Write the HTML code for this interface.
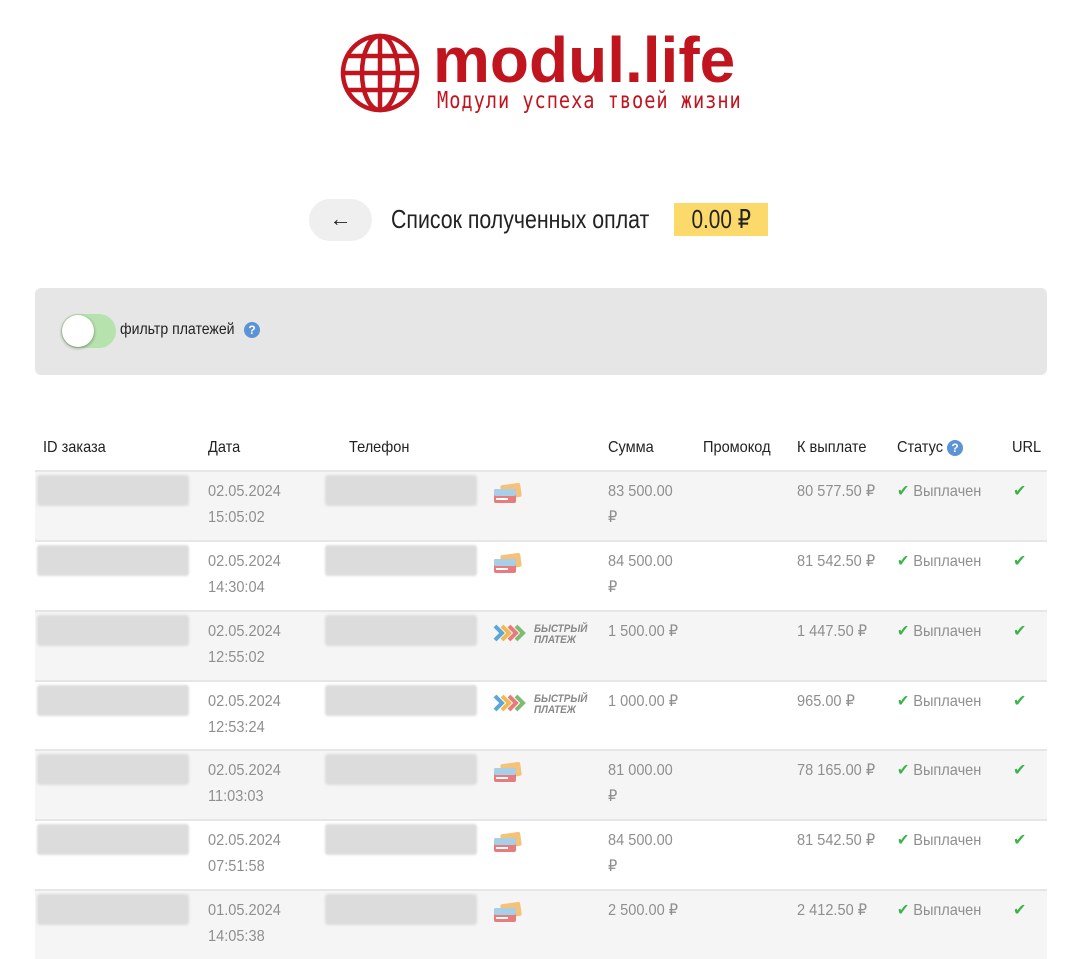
<!DOCTYPE html><html><head><meta charset="utf-8"><style>
*{margin:0;padding:0;box-sizing:border-box}
body{width:1080px;height:948px;background:#fff;font-family:"Liberation Sans",sans-serif;position:relative;overflow:hidden;color:#222}
.a{position:absolute;white-space:nowrap}
.n{transform:scaleX(.91);transform-origin:0 0}
.row{position:absolute;left:35px;width:1012px;height:70px;border-top:2px solid #e6e6e6}
.g{color:#8f8f8f;font-size:16px;line-height:26px}
.blur{position:absolute;height:31px;background:#dcdcdc;border-radius:3px;filter:blur(1px)}
.h{font-size:16px;color:#222}
.ok{color:#3cb44b;font-size:16px}
</style></head><body>
<svg class="a" style="left:339px;top:32px" width="82" height="82" viewBox="0 0 82 82"><g fill="none" stroke="#c0141e" stroke-width="4.5"><circle cx="41" cy="41" r="37"/><ellipse cx="41" cy="41" rx="18" ry="37"/><line x1="41" y1="4" x2="41" y2="78"/><line x1="4" y1="41" x2="78" y2="41"/><line x1="9" y1="24" x2="73" y2="24"/><line x1="9" y1="58" x2="73" y2="58"/></g></svg>
<div class="a" style="left:433px;top:22px;font-weight:bold;font-size:64px;color:#c0141e;line-height:76px">modul.life</div>
<div class="a" style="left:437px;top:88px;font-size:23px;color:#c0141e;letter-spacing:1.2px;font-family:'DejaVu Sans Mono',monospace;transform:scaleX(.81);transform-origin:0 0">Модули успеха твоей жизни</div>
<div class="a" style="left:309px;top:199px;width:63px;height:42px;border-radius:21px;background:#efefef;text-align:center;font-size:22px;line-height:40px;font-weight:bold">&larr;</div>
<div class="a" style="left:391px;top:203px;font-size:26px;line-height:32px;color:#222;transform:scaleX(.82);transform-origin:0 0">Список полученных оплат</div>
<div class="a" style="left:674px;top:203px;width:94px;height:33px;background:#fbd96b;line-height:33px;text-align:center"><span style="display:inline-block;font-size:26px;transform:scaleX(.8)">0.00 ₽</span></div>
<div class="a" style="left:35px;top:288px;width:1012px;height:87px;background:#e6e6e6;border-radius:6px"></div>
<div class="a" style="left:61px;top:314px;width:55px;height:34px;border-radius:17px;background:#b5e2ad"></div>
<div class="a" style="left:62px;top:315px;width:32px;height:32px;border-radius:16px;background:#fff;box-shadow:0 1px 3px rgba(0,0,0,.4)"></div>
<div class="a" style="left:120px;top:321px;font-size:16px;transform:scaleX(.88);transform-origin:0 0">фильтр платежей</div>
<div class="a" style="left:244px;top:322px;width:16px;height:16px;border-radius:8px;background:#5b93d6;color:#fff;font-size:12px;font-weight:bold;text-align:center;line-height:16px">?</div>
<div class="a h n" style="left:43px;top:439px">ID заказа</div>
<div class="a h n" style="left:208px;top:439px">Дата</div>
<div class="a h n" style="left:349px;top:439px">Телефон</div>
<div class="a h n" style="left:608px;top:439px">Сумма</div>
<div class="a h n" style="left:703px;top:439px">Промокод</div>
<div class="a h n" style="left:797px;top:439px">К выплате</div>
<div class="a h n" style="left:897px;top:439px">Статус</div>
<div class="a" style="left:947px;top:440px;width:16px;height:16px;border-radius:8px;background:#5b93d6;color:#fff;font-size:12px;font-weight:bold;text-align:center;line-height:16px">?</div>
<div class="a h n" style="left:1012px;top:439px">URL</div>
<div id="rows"></div>
<script>
var d=[["02.05.2024","15:05:02","c","83 500.00<br>₽","80 577.50 ₽"],
["02.05.2024","14:30:04","c","84 500.00<br>₽","81 542.50 ₽"],
["02.05.2024","12:55:02","s","1 500.00 ₽","1 447.50 ₽"],
["02.05.2024","12:53:24","s","1 000.00 ₽","965.00 ₽"],
["02.05.2024","11:03:03","c","81 000.00<br>₽","78 165.00 ₽"],
["02.05.2024","07:51:58","c","84 500.00<br>₽","81 542.50 ₽"],
["01.05.2024","14:05:38","c","2 500.00 ₽","2 412.50 ₽"]];
var tops=[470,540,610,680,749,819,889],h="";
var card='<svg width="30" height="22" viewBox="0 0 30 22"><rect x="8" y="1" width="20" height="14" rx="2" fill="#f5c27a" transform="rotate(-8 18 8)"/><rect x="1" y="6" width="22" height="14" rx="2" fill="#e87b7b"/><rect x="1" y="6" width="22" height="7" rx="2" fill="#a8cfe8"/><rect x="3" y="15" width="12" height="2" fill="#fff"/></svg>';
var sbp='<svg width="34" height="20" viewBox="0 0 34 20"><g fill="none" stroke-width="4"><polyline points="2,3 9,10 2,17" stroke="#5aa7d8"/><polyline points="9,3 16,10 9,17" stroke="#f2b851"/><polyline points="16,3 23,10 16,17" stroke="#e87b7b"/><polyline points="23,3 30,10 23,17" stroke="#7dbb74"/></g></svg><span style="position:absolute;left:41px;top:1px;font:italic bold 11px/11px \'Liberation Sans\',sans-serif;color:#888;transform:scaleX(.9);transform-origin:0 0">БЫСТРЫЙ<br>ПЛАТЕЖ</span>';
d.forEach(function(r,i){var t=tops[i];
h+='<div class="row" style="top:'+t+'px;background:'+(i%2?'#fff':'#f5f5f5')+'"></div>';
h+='<div class="blur" style="left:37px;top:'+(t+5)+'px;width:152px"></div><div class="blur" style="left:325px;top:'+(t+5)+'px;width:152px"></div>';
h+='<div class="a g n" style="left:208px;top:'+(t+9)+'px">'+r[0]+'<br>'+r[1]+'</div>';
h+='<div class="a" style="left:493px;top:'+(t+13)+'px;width:110px;height:24px">'+(r[2]=="c"?card:sbp)+'</div>';
h+='<div class="a g n" style="left:608px;top:'+(t+9)+'px">'+r[3]+'</div>';
h+='<div class="a g n" style="left:797px;top:'+(t+9)+'px">'+r[4]+'</div>';
h+='<div class="a g n" style="left:897px;top:'+(t+9)+'px"><span class="ok">✔</span> Выплачен</div>';
h+='<div class="a g" style="left:1013px;top:'+(t+9)+'px"><span class="ok">✔</span></div>';});
document.getElementById('rows').innerHTML=h;
</script>
</body></html>
